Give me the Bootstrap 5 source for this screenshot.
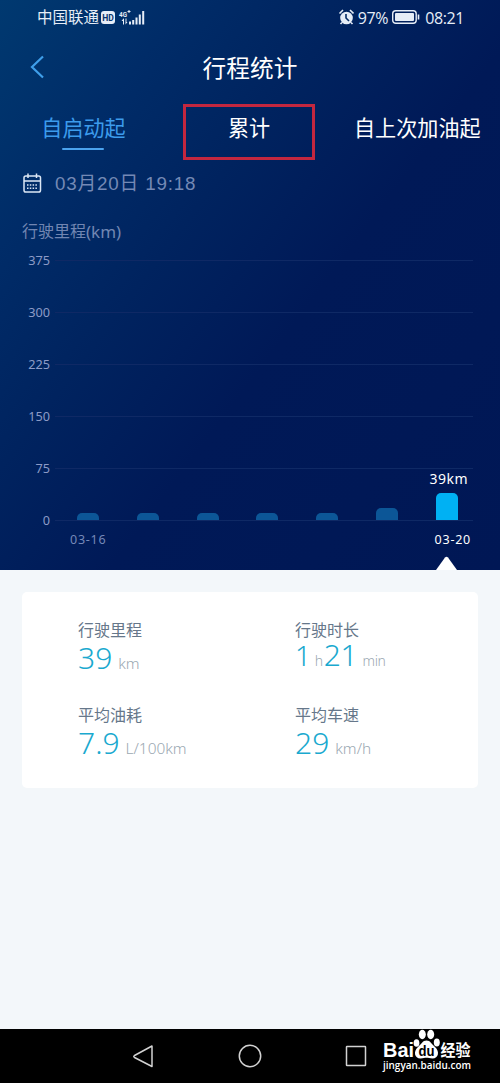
<!DOCTYPE html>
<html lang="zh-CN">
<head>
<meta charset="utf-8">
<meta name="viewport" content="width=device-width, initial-scale=1">
<title>行程统计</title>
<link href="https://cdn.jsdelivr.net/npm/bootstrap@5.3.0/dist/css/bootstrap.min.css" rel="stylesheet">
<style>
body{font-family:"Noto Sans","Noto Sans CJK SC",sans-serif;background:#f3f7fa;color:#fff;line-height:1}
.app{width:500px;height:1083px}
.hero{height:570px;background:linear-gradient(127deg,#003970 0%,#002c68 20%,#00235f 38%,#001957 58%,#001755 100%)}
.statusbar{height:34px;padding:1px 36px 0 37px;font-size:15.5px;color:#e6edf7}
.clock-text{font-family:"Open Sans","Noto Sans",sans-serif;font-size:16px}
.topbar{height:70px;padding:0 30px 2px}
.topbar h1{font-size:23.7px;font-weight:400}
.back-key{top:21px}
.tabs{height:56px;font-size:21.1px}
.tab-item{height:48px}
.tab-on{color:#3c9cec;width:167px}
.tab-on::after{content:"";position:absolute;left:62px;top:44px;width:42px;height:2px;border-radius:1px;background:#4ba3ee}
.tab-boxed{width:132px;height:56px;border:3px solid #c3273f;margin-left:16px;padding-bottom:8px}
.tab-last{margin-left:39px}
.date-row{height:48px;padding-left:22px;color:#7489b5;font-family:"Liberation Sans","Noto Sans CJK SC",sans-serif;font-size:18.8px;letter-spacing:.8px}
.unit-row{height:46px;padding-left:22px;color:#7186b2;font-size:16px}
.unit-row span{font-size:17px}
.plot{height:266px;padding-top:6px}
.axis-row{height:52px;color:#8c9bc6;font-size:12.7px}
.axis-row:nth-child(6){height:0}
.axis-row span{width:50px;line-height:14px;margin-top:-7px}
.axis-row i{height:1px;background:#0f2965;margin-left:5px;margin-right:27px}
.bars{left:77px;bottom:0;width:381px;height:52px}
.bar-fill{width:22px;border-radius:5px 5px 0 0;background:#0c5697}
.bar-fill.now{background:#00b1f3}
.bar-tip{right:32px;bottom:34px;font-size:14px;letter-spacing:.5px}
.dates{height:38px;padding:2px 29px 0 70px;font-size:12.5px;letter-spacing:.75px;color:#7588b7}
.pointer{left:436px;bottom:0}
.sheet{height:459px;padding:22px 22px 0 22px}
.trip{height:196px;border-radius:5px;background:#fff;padding:27px 0 0 56px}
.stat{width:217px;height:85px}
.stat:nth-child(even){width:183px}
.stat-name{color:#66778a;font-size:16px;line-height:23px}
.stat-num{color:#1aa9cf;font-weight:300;font-size:30px;line-height:32px}
.stat-unit{color:#9ba8b2;font-weight:300;font-size:15.4px;margin-left:6px}
.stat-hours{font-size:28px;margin-right:-2px}
.stat-unit.hour{margin-right:1px}
.stat-time{margin-top:-3px;letter-spacing:-.3px}
.stat-time .stat-unit{font-size:14px}
.stat-time .stat-unit:last-child{margin-left:5px}
.navkeys{height:54px;background:#000}
.navkeys svg{display:block}
.brand{left:380px;bottom:0;width:95px;height:54px;overflow:visible}
</style>
</head>
<body>
<main class="app d-flex flex-column overflow-hidden">
  <section class="hero position-relative">
    <div class="statusbar d-flex align-items-center justify-content-between">
      <div class="d-flex align-items-center"><span>中国联通</span>
        <svg width="50" height="18" viewBox="0 0 50 18" fill="#e6edf7">
          <rect x="2" y="2" width="14" height="13" rx="3"/>
          <text x="3.200" y="11.800" font-family="Roboto" font-size="9" font-weight="700" fill="#08336c" textLength="11.600" lengthAdjust="spacingAndGlyphs">HD</text>
          <text x="20" y="7.500" font-family="Roboto" font-size="8" font-weight="700" textLength="8" lengthAdjust="spacingAndGlyphs">4G</text>
          <path d="M29.500 1h1v1h1v1h-1v1h-1V3h-1V2h1zM24.500 9.500l-2 2.500h1.500v3.500h1v-6zM26.500 9.500v6l2-2.500H27.500V9.500zM30 12.500h2v3h-2zM33.200 11h2v4.500h-2zM36.500 8.500h2v7h-2zM39.800 5.500h2v10h-2zM43.200 2h2v13.500h-2z"/>
        </svg>
      </div>
      <div class="d-flex align-items-center clock-text">
        <svg width="17" height="18" viewBox="0 0 17 18" class="me-1"><circle cx="9.500" cy="9" r="6.300" fill="#e6edf7"/><path d="M2.500 4.500L6 1M16.500 4.500L13 1M5 13.500L3.500 15M14 13.500l1.500 1.500" stroke="#e6edf7" stroke-width="1.600" fill="none"/><path d="M9 5v4l3 3" fill="none" stroke="#052b65" stroke-width="1.600"/></svg>
        <span style="letter-spacing:-.4px">97%</span>
        <svg width="29" height="18" viewBox="0 0 29 18" class="ms-1 me-1"><rect x=".7" y="1.700" width="23.500" height="12.600" rx="3" fill="none" stroke="#e6edf7" stroke-width="1.400"/><rect x="3" y="4" width="19" height="8" rx="1" fill="#e6edf7"/><path d="M26.500 5.500v5" stroke="#e6edf7" stroke-width="1.600"/></svg>
        <span style="letter-spacing:-.4px">08:21</span>
      </div>
    </div>
    <header class="topbar d-flex align-items-center justify-content-center position-relative">
      <svg class="back-key position-absolute start-0 ms-4" width="24" height="24" viewBox="0 0 24 24"><path d="M19 1.500L8 12l11 10.500" fill="none" stroke="#3f9fea" stroke-width="2.200"/></svg>
      <h1 class="m-0">行程统计</h1>
    </header>
    <nav class="tabs d-flex align-items-start">
      <div class="tab-item tab-on position-relative d-flex align-items-center justify-content-center">自启动起</div>
      <div class="tab-boxed d-flex align-items-center justify-content-center">累计</div>
      <div class="tab-item tab-last d-flex align-items-center">自上次加油起</div>
    </nav>
    <div class="date-row d-flex align-items-center">
      <svg width="21" height="22" viewBox="0 0 21 22" fill="none" stroke="#dce7f5" stroke-width="1.500" class="me-2"><rect x="2" y="3" width="16.500" height="16" rx="1.800"/><path d="M2 8h16.500M6 .5V5M14.500 .5V5"/><path d="M5 12h11M5 15.200h11" stroke-dasharray="1.500 1.300"/></svg>
      <span class="ms-1">03月20日 19:18</span>
    </div>
    <div class="unit-row d-flex align-items-center">行驶里程<span>(km)</span></div>
    <div class="plot position-relative">
      <div class="axis-row d-flex"><span class="text-end">375</span><i class="flex-fill"></i></div>
      <div class="axis-row d-flex"><span class="text-end">300</span><i class="flex-fill"></i></div>
      <div class="axis-row d-flex"><span class="text-end">225</span><i class="flex-fill"></i></div>
      <div class="axis-row d-flex"><span class="text-end">150</span><i class="flex-fill"></i></div>
      <div class="axis-row d-flex"><span class="text-end">75</span><i class="flex-fill"></i></div>
      <div class="axis-row d-flex"><span class="text-end">0</span><i class="flex-fill"></i></div>
      <div class="bars position-absolute d-flex align-items-end justify-content-between">
        <div class="bar-fill" style="height:7px"></div><div class="bar-fill" style="height:7px"></div><div class="bar-fill" style="height:7px"></div><div class="bar-fill" style="height:7px"></div><div class="bar-fill" style="height:7px"></div><div class="bar-fill" style="height:12px"></div><div class="bar-fill now" style="height:27px"></div>
      </div>
      <div class="bar-tip position-absolute">39km</div>
    </div>
    <div class="dates d-flex align-items-center justify-content-between"><span>03-16</span><span class="text-white">03-20</span></div>
    <svg class="pointer position-absolute" width="21" height="14" viewBox="0 0 21 14"><path d="M0 14L9 1.500Q10.500 0 12 1.500L21 14z" fill="#fff"/></svg>
  </section>
  <section class="sheet">
    <div class="trip d-flex flex-wrap align-content-start">
      <div class="stat"><div class="stat-name">行驶里程</div><div class="stat-num">39<span class="stat-unit">km</span></div></div>
      <div class="stat"><div class="stat-name">行驶时长</div><div class="stat-num stat-time"><span class="stat-hours">1</span><span class="stat-unit hour">h</span>21<span class="stat-unit">min</span></div></div>
      <div class="stat"><div class="stat-name">平均油耗</div><div class="stat-num">7.9<span class="stat-unit">L/100km</span></div></div>
      <div class="stat"><div class="stat-name">平均车速</div><div class="stat-num">29<span class="stat-unit">km/h</span></div></div>
    </div>
  </section>
  <footer class="navkeys position-relative">
    <svg width="375" height="54" viewBox="0 0 375 54" fill="none" stroke="#d2d2d2" stroke-width="1.500"><path d="M152 17v20.500l-17.500-9q-1.500-1 0-2z" stroke-linejoin="round"/><circle cx="250" cy="27" r="10.700"/><rect x="346.500" y="17.500" width="19" height="19" rx=".5"/></svg>
    <svg class="brand position-absolute" viewBox="380 1029 95 54" fill="#fff">
      <g font-family="'Liberation Sans','Noto Sans CJK SC',sans-serif" font-weight="700">
        <text x="383" y="1056.500" font-size="19.500" textLength="31" lengthAdjust="spacingAndGlyphs">Bai</text>
        <ellipse cx="416.500" cy="1043" rx="2.900" ry="3.800"/><ellipse cx="422.300" cy="1034.500" rx="3.500" ry="4.700"/><ellipse cx="430.700" cy="1034.500" rx="3.500" ry="4.700"/><ellipse cx="436.800" cy="1042.500" rx="3" ry="3.900"/>
        <path d="M426.500 1040.500c4 0 5 3.500 8.500 6.500 5 4.500 3.500 11.500-2.500 11.500-3 0-4-.7-6-.7s-3 .7-6 .7c-6 0-7.500-7-2.500-11.500 3.500-3 4.500-6.500 8.500-6.500z"/>
        <text x="418.500" y="1056" font-size="14" fill="#000" textLength="16" lengthAdjust="spacingAndGlyphs">du</text>
        <text x="440.500" y="1055.500" font-size="16" textLength="30" lengthAdjust="spacingAndGlyphs">经验</text>
        <text x="383" y="1069" font-size="10.500" font-family="'Open Sans',sans-serif" font-weight="600" textLength="88" lengthAdjust="spacingAndGlyphs">jingyan.baidu.com</text>
      </g>
    </svg>
  </footer>
</main>
<script src="https://cdn.jsdelivr.net/npm/bootstrap@5.3.0/dist/js/bootstrap.bundle.min.js"></script>
</body>
</html>
